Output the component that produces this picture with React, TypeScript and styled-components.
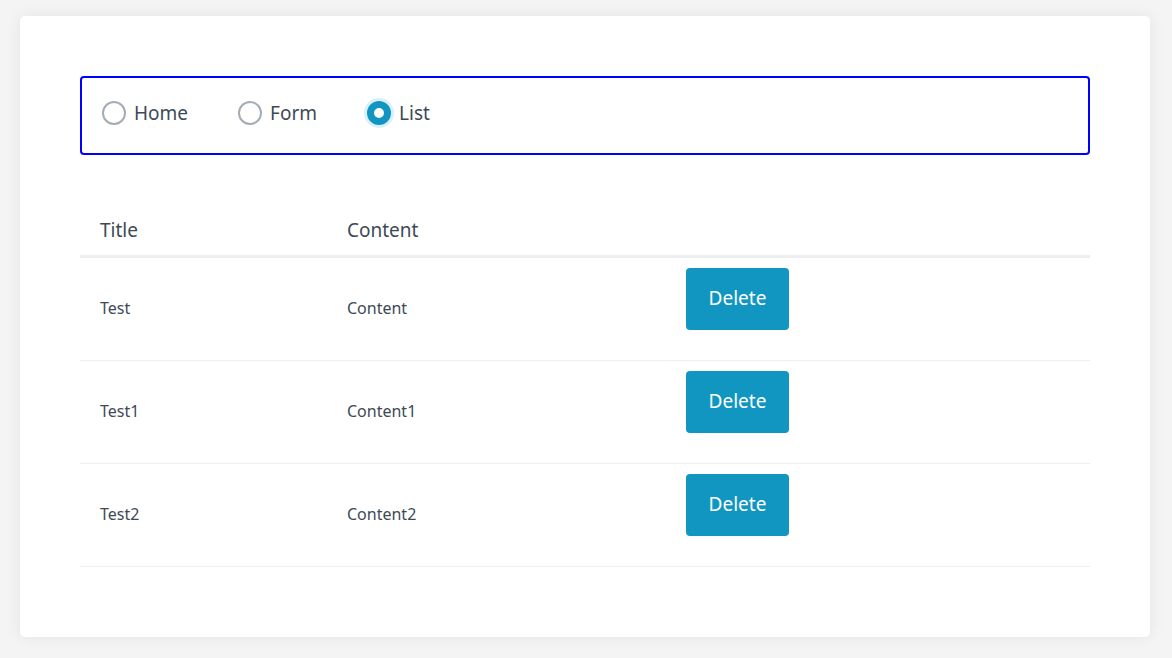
import styled, { createGlobalStyle } from "styled-components";

const GlobalStyle = createGlobalStyle`
  html, body {
    margin: 0;
    padding: 0;
    background: #f4f4f5;
    font-family: "Noto Sans", "Open Sans", sans-serif;
    color: #3d4a56;
  }
`;

const Page = styled.div`
  padding: 16px 22px 21px 20px;
`;

const Card = styled.div`
  background: #ffffff;
  border-radius: 5px;
  box-shadow: 0 0 16px rgba(0, 0, 0, 0.07);
  padding: 60px 60px 70px 60px;
`;

const Nav = styled.div`
  height: 75px;
  box-sizing: content-box;
  border: 2px solid #0000ff;
  border-radius: 4px;
  display: flex;
  align-items: center;
  padding: 0 20px;
  gap: 50px;
`;

const RadioLabel = styled.label`
  display: flex;
  align-items: center;
  gap: 8px;
  font-size: 19px;
  color: #3d4a56;
  cursor: pointer;
  margin-top: -5px;
`;

const Circle = styled.span<{ $checked?: boolean }>`
  width: 24px;
  height: 24px;
  box-sizing: border-box;
  border-radius: 50%;
  display: inline-flex;
  border: ${(p) => (p.$checked ? "7px solid #1196c1" : "2px solid #a3adb7")};
  background: #fff;
  box-shadow: ${(p) => (p.$checked ? "0 0 0 3px #dbeff7" : "none")};
`;

const Table = styled.table`
  width: 100%;
  margin-top: 45px;
  border-collapse: collapse;
  table-layout: fixed;
`;

const Th = styled.th<{ $w?: number }>`
  box-sizing: border-box;
  text-align: left;
  font-weight: 400;
  font-size: 19px;
  line-height: 24px;
  padding: 18px 20px 13px;
  border-bottom: 3px solid #eceef1;
  width: ${(p) => (p.$w ? `${p.$w}px` : "auto")};
`;

const Td = styled.td`
  font-size: 16px;
  padding: 10px 20px 12px;
  vertical-align: middle;
  border-bottom: 1px solid #eceef1;
`;

const DeleteButton = styled.button`
  display: block;
  width: 103px;
  height: 62px;
  margin-bottom: 18px;
  padding: 0 0 2px;
  border: none;
  border-radius: 4px;
  background: #1196c1;
  color: #ffffff;
  font-family: inherit;
  font-size: 19px;
  cursor: pointer;
`;

const tabs = ["Home", "Form", "List"];

const rows = [
  { title: "Test", content: "Content" },
  { title: "Test1", content: "Content1" },
  { title: "Test2", content: "Content2" },
];

const App = () => {
  return (
    <Page>
      <GlobalStyle />
      <Card>
        <Nav>
          {tabs.map((t) => (
            <RadioLabel key={t}>
              <Circle $checked={t === "List"} />
              {t}
            </RadioLabel>
          ))}
        </Nav>
        <Table>
          <thead>
            <tr>
              <Th $w={247}>Title</Th>
              <Th $w={339}>Content</Th>
              <Th />
            </tr>
          </thead>
          <tbody>
            {rows.map((r) => (
              <tr key={r.title}>
                <Td>{r.title}</Td>
                <Td>{r.content}</Td>
                <Td>
                  <DeleteButton>Delete</DeleteButton>
                </Td>
              </tr>
            ))}
          </tbody>
        </Table>
      </Card>
    </Page>
  );
};

export default App;
